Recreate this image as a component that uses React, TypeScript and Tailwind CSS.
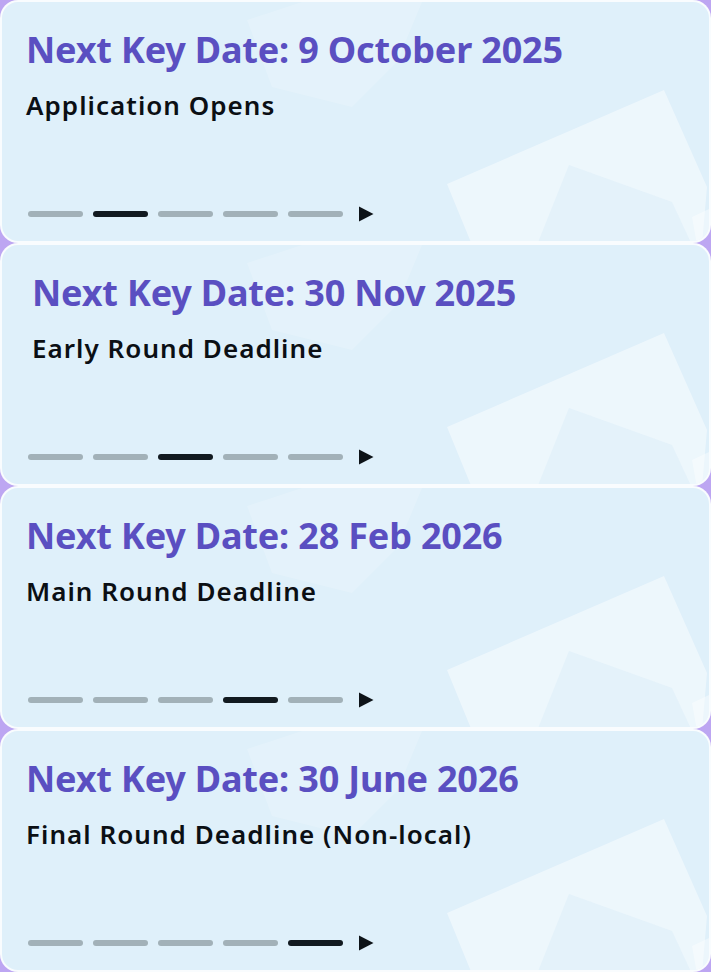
const dates = [
  { date: "9 October 2025", label: "Application Opens", active: 1, shift: false },
  { date: "30 Nov 2025", label: "Early Round Deadline", active: 2, shift: true },
  { date: "28 Feb 2026", label: "Main Round Deadline", active: 3, shift: false },
  { date: "30 June 2026", label: "Final Round Deadline (Non-local)", active: 4, shift: false },
];

function Shapes() {
  return (
    <svg
      className="absolute inset-0 pointer-events-none"
      width="711"
      height="243"
      viewBox="0 0 711 243"
      fill="none"
    >
      <polygon points="245,18 300,0 420,0 395,60 350,105 270,85" fill="white" fillOpacity="0.18" />
      <polygon points="445,182 662,88 705,185 700,243 470,243" fill="white" fillOpacity="0.45" />
      <polygon points="567,163 670,200 690,243 535,243" fill="#dff0fa" fillOpacity="0.7" />
      <polygon points="690,215 711,205 711,243 695,243" fill="white" fillOpacity="0.4" />
    </svg>
  );
}

function Card({ date, label, active, shift }: { date: string; label: string; active: number; shift: boolean }) {
  return (
    <div className="relative h-[243px] overflow-hidden rounded-[18px] border-2 border-white/80 bg-[#dff0fa]">
      <Shapes />
      <div className={`relative flex h-full flex-col pt-[26px] ${shift ? "pl-[30px]" : "pl-[24px]"}`}>
        <h2 className="text-[36px] font-bold leading-[44px] tracking-[-0.005em] text-[#5a4fc1]">
          Next Key Date: {date}
        </h2>
        <p className="mt-[17px] text-[26px] font-semibold leading-[32px] tracking-[0.04em] text-[#0b0f14]">
          {label}
        </p>
      </div>
      <div className="absolute bottom-[19px] left-[26px] flex items-center gap-[10px]">
        {[0, 1, 2, 3, 4].map((i) => (
          <span
            key={i}
            className={`h-[6px] w-[55px] rounded-full ${i === active ? "bg-[#121a20]" : "bg-[#a2b1b8]"}`}
          />
        ))}
        <svg className="ml-[5px]" width="16" height="16" viewBox="0 0 16 16">
          <polygon points="1,0.5 15.5,8 1,15.5" fill="#0d1318" />
        </svg>
      </div>
    </div>
  );
}

export default function App() {
  return (
    <div className="min-h-[972px] w-[711px] bg-[#bda6f2]" style={{ fontFamily: '"Noto Sans", sans-serif' }}>
      {dates.map((d) => (
        <Card key={d.date} {...d} />
      ))}
    </div>
  );
}
